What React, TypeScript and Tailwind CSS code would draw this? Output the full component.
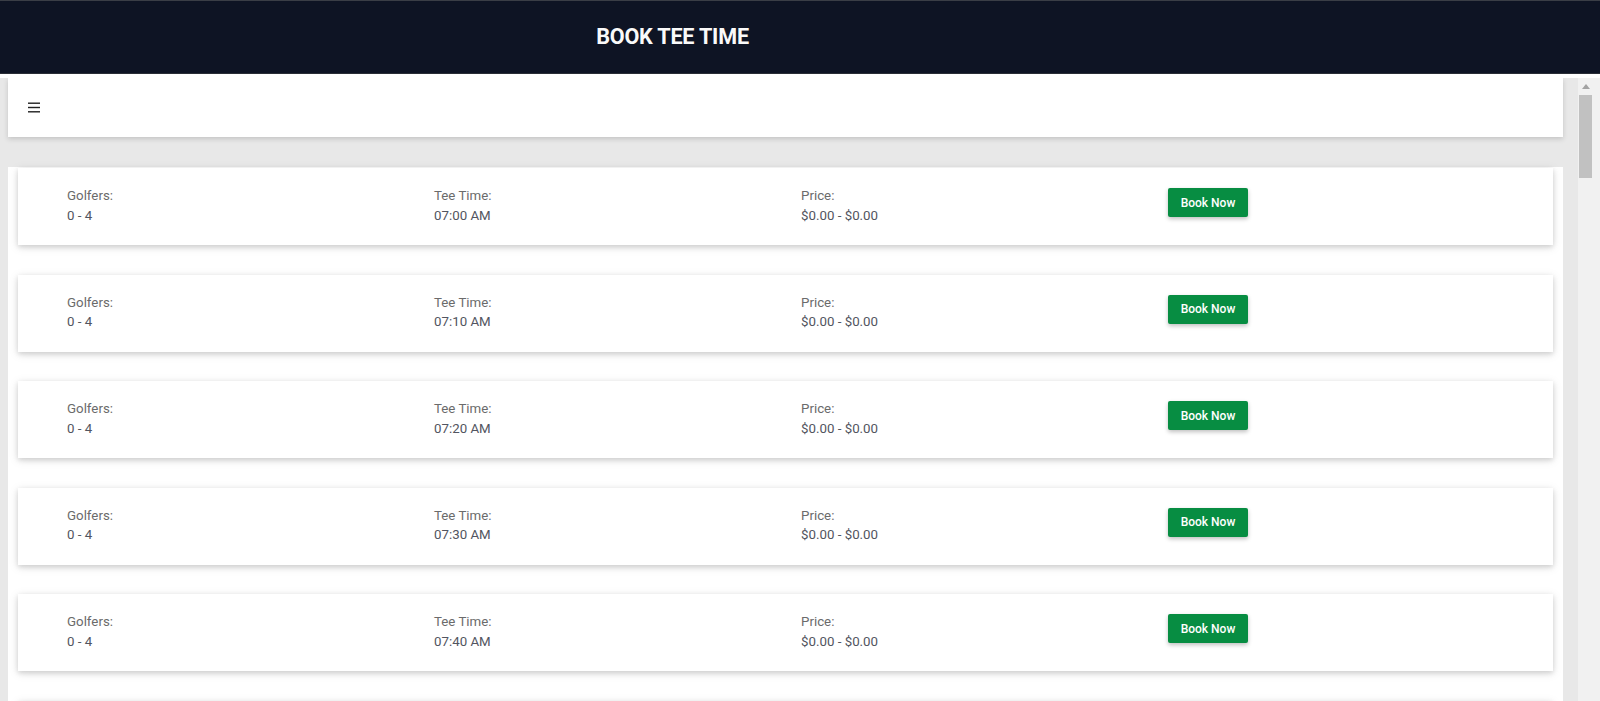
const times = ['07:00 AM', '07:10 AM', '07:20 AM', '07:30 AM', '07:40 AM']

function Field({ label, value }: { label: string; value: string }) {
  return (
    <div className="text-[13.3px] leading-[19.5px]">
      <div className="text-[#6b6b6b]">{label}</div>
      <div className="text-[#525560]">{value}</div>
    </div>
  )
}

function TeeCard({ time }: { time?: string }) {
  return (
    <div className="h-[77px] shrink-0 bg-white pl-[49px] pr-[18px] pt-[18px] shadow-[0_2px_5px_rgba(0,0,0,0.14),0_2px_10px_rgba(0,0,0,0.10)]">
      {time && (
        <div className="grid grid-cols-4">
          <Field label="Golfers:" value="0 - 4" />
          <Field label="Tee Time:" value={time} />
          <Field label="Price:" value="$0.00 - $0.00" />
          <div className="pt-[2px]">
            <button className="h-[29px] w-[80px] rounded-[2px] bg-[#078d42] text-[12px] font-medium text-white shadow-[0_2px_4px_rgba(0,0,0,0.25)]">
              Book Now
            </button>
          </div>
        </div>
      )}
    </div>
  )
}

export default function App() {
  return (
    <div className="h-[701px] w-[1600px] overflow-hidden bg-white font-['Roboto','Liberation_Sans',sans-serif]">
      <header className="flex h-[74px] items-center border-t border-b border-t-[#3a3e46] border-b-[#2a2e36] bg-[#0e1424]">
        <div className="flex w-[1345px] justify-center">
          <h1 className="text-[21.6px] font-bold tracking-[-0.2px] text-[#fafafa]">BOOK TEE TIME</h1>
        </div>
      </header>

      <div className="mt-[4px] flex h-[623px]">
        <div className="flex-1 overflow-hidden bg-[#e8e8e8] pl-[8px] pr-[15px]">
          <nav className="flex h-[59px] items-center bg-white pl-[20px] shadow-[0_2px_5px_rgba(0,0,0,0.16)]">
            <svg width="12" height="11" viewBox="0 0 12 11" className="mt-[-1px]">
              <rect x="0" y="0.5" width="12" height="1.4" fill="#222" />
              <rect x="0" y="4.8" width="12" height="1.4" fill="#222" />
              <rect x="0" y="9.1" width="12" height="1.4" fill="#222" />
            </svg>
          </nav>

          <div className="mt-[30px] flex flex-col gap-[29.6px] bg-white px-[10px] pt-[1px] pb-[40px]">
            {times.map((t) => (
              <TeeCard key={t} time={t} />
            ))}
            <TeeCard />
          </div>
        </div>

        <div className="flex w-[22px] flex-col bg-[#f1f1f1] pl-[1px]">
          <div className="flex h-[17px] w-[13px] items-center justify-center">
            <svg width="8" height="5" viewBox="0 0 8 5">
              <path d="M0 5 L4 0 L8 5 Z" fill="#a3a3a3" />
            </svg>
          </div>
          <div className="h-[83px] w-[13px] bg-[#c1c1c1]" />
        </div>
      </div>
    </div>
  )
}
